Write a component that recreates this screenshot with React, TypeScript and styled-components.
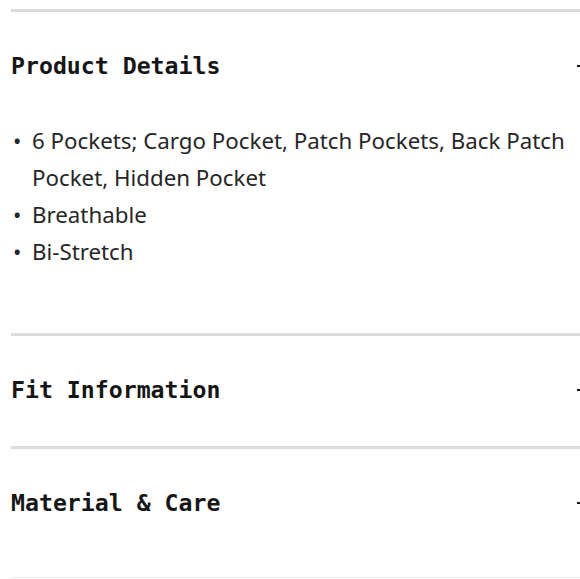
import React from "react";
import styled, { createGlobalStyle } from "styled-components";

const Global = createGlobalStyle`
  html, body { margin: 0; padding: 0; background: #fff; overflow: hidden; }
  body { width: 580px; height: 579px; }
`;

const Page = styled.div`
  padding: 9px 0 0 11px;
  width: 581px;
`;

const Section = styled.section`
  border-top: 3px solid #dcdcdc;
`;

const Header = styled.div`
  box-sizing: border-box;
  height: 110px;
  padding-bottom: 3px;
  display: flex;
  align-items: center;
  justify-content: space-between;
`;

const Title = styled.h3`
  margin: 0;
  font-family: "DejaVu Sans Mono", "Liberation Mono", monospace;
  font-weight: 700;
  font-size: 23.2px;
  color: #161616;
`;

const Icon = styled.span`
  display: block;
  width: 12px;
  height: 2px;
  background: #161616;
  margin-right: 3px;
`;

const List = styled.ul`
  margin: 0;
  padding: 0 0 63px 21px;
  font-family: "Noto Sans", sans-serif;
  font-size: 22.3px;
  line-height: 37px;
  color: #262626;
  list-style: none;
`;

const Item = styled.li`
  position: relative;
  &::before {
    content: "•";
    position: absolute;
    left: -19px;
  }
`;

const EndRule = styled.div`
  margin-top: 18px;
  border-top: 1px solid #ededed;
`;

const sections = [
  {
    title: "Product Details",
    items: [
      "6 Pockets; Cargo Pocket, Patch Pockets, Back Patch Pocket, Hidden Pocket",
      "Breathable",
      "Bi-Stretch",
    ],
  },
  { title: "Fit Information", items: [] },
  { title: "Material & Care", items: [] },
];

export default function App() {
  return (
    <>
      <Global />
      <Page>
        {sections.map((s) => (
          <Section key={s.title}>
            <Header>
              <Title>{s.title}</Title>
              <Icon />
            </Header>
            {s.items.length > 0 && (
              <List>
                {s.items.map((it) => (
                  <Item key={it}>{it}</Item>
                ))}
              </List>
            )}
          </Section>
        ))}
        <EndRule />
      </Page>
    </>
  );
}
